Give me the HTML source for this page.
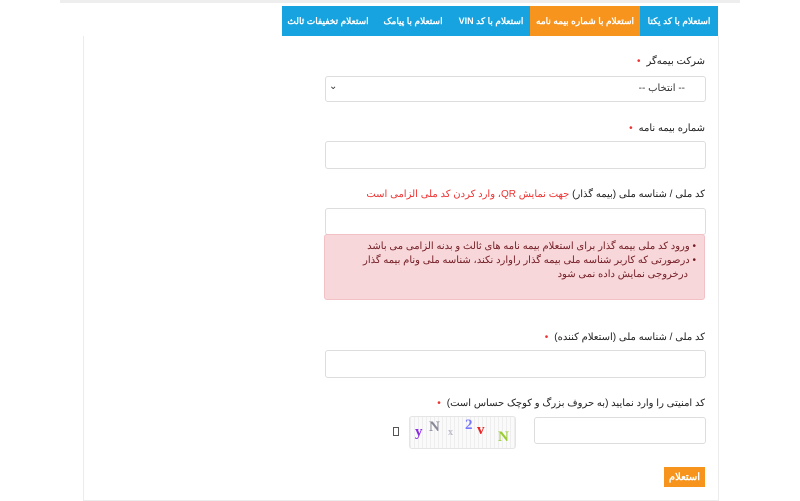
<!DOCTYPE html>
<html><head><meta charset="utf-8"><style>
body{margin:0;width:800px;height:500px;background:#fff;font-family:"Liberation Sans","Noto Sans CJK SC",sans-serif;font-size:10px;color:#333;position:relative;overflow:hidden}
.a{position:absolute}
.topbar{left:60px;top:0;width:680px;height:3px;background:#eee}
.tabs{left:282px;top:6px;width:436px;height:30px;background:#16a3df;display:flex;direction:rtl}
.tab{color:#fff;font-size:9px;font-weight:bold;display:flex;align-items:center;justify-content:center;height:30px;white-space:nowrap}
.panel{left:83px;top:36px;width:634px;height:464px;border:1px solid #ececec;border-top:none}
.lbl{direction:rtl;right:95px;font-size:10px;color:#222;white-space:nowrap}
.lbl .r{color:#e33;margin-right:6px}
.inp{left:325px;width:379px;border:1px solid #ddd;border-radius:3px;background:#fff}
</style></head><body>
<div class="a topbar"></div>
<div class="a tabs">
<div class="tab" style="width:78px">استعلام با کد یکتا</div>
<div class="tab" style="width:110px;background:#f7941d">استعلام با شماره بیمه نامه</div>
<div class="tab" style="width:78px">استعلام با کد VIN</div>
<div class="tab" style="width:78px">استعلام با پیامک</div>
<div class="tab" style="width:92px">استعلام تخفیفات ثالث</div>
</div>
<div class="a panel"></div>
<div class="a lbl" style="top:56px">شرکت بیمه‌گر<span class="r">•</span></div>
<div class="a inp" style="top:76px;height:24px"><span class="a" style="right:20px;top:6px;direction:rtl">-- انتخاب --</span><span class="a" style="left:3px;top:4px;font-size:10px">⌄</span></div>
<div class="a lbl" style="top:123px">شماره بیمه نامه<span class="r">•</span></div>
<div class="a inp" style="top:141px;height:26px"></div>
<div class="a lbl" style="top:189px">کد ملی / شناسه ملی (بیمه گذار) <span style="color:#e33">جهت نمایش QR، وارد کردن کد ملی الزامی است</span></div>
<div class="a inp" style="top:208px;height:25px"></div>
<div class="a" style="left:324px;top:234px;width:381px;height:66px;background:#f8d7da;border:1px solid #f1c1c6;border-radius:3px;box-sizing:border-box;direction:rtl;color:#721c24;font-size:10px;line-height:14px;padding:5px 8px 0 6px">
<div>• ورود کد ملی بیمه گذار برای استعلام بیمه نامه های ثالث و بدنه الزامی می باشد</div>
<div style="padding-right:8px;text-indent:-8px">• درصورتی که کاربر شناسه ملی بیمه گذار راوارد نکند، شناسه ملی ونام بیمه گذار درخروجی نمایش داده نمی شود</div>
</div>
<div class="a lbl" style="top:332px">کد ملی / شناسه ملی (استعلام کننده)<span class="r">•</span></div>
<div class="a inp" style="top:350px;height:26px"></div>
<div class="a lbl" style="top:398px">کد امنیتی را وارد نمایید (به حروف بزرگ و کوچک حساس است)<span class="r">•</span></div>
<div class="a" style="left:534px;top:417px;width:170px;height:25px;border:1px solid #ddd;border-radius:3px"></div>
<div class="a" style="left:409px;top:416px;width:105px;height:31px;border:1px solid #e5e5e5;border-radius:3px;background:repeating-linear-gradient(90deg,#eee 0 1px,#fafafa 1px 4px),#f6f6f6;font-family:'Liberation Serif',serif;font-weight:bold;font-size:15px">
<span class="a" style="left:5px;top:7px;color:#8b2be2">y</span><span class="a" style="left:19px;top:2px;color:#889">N</span><span class="a" style="left:38px;top:10px;color:#bbc;font-size:10px">x</span><span class="a" style="left:55px;top:0;color:#77f">2</span><span class="a" style="left:67px;top:5px;color:#e22">v</span><span class="a" style="left:88px;top:12px;color:#9c3">N</span></div>
<div class="a" style="left:393px;top:427px;width:4px;height:7px;border:1px solid #555"></div>
<div class="a" style="left:664px;top:467px;width:41px;height:20px;background:#f7941d;color:#fff;font-size:10px;font-weight:bold;display:flex;align-items:center;justify-content:center">استعلام</div>
</body></html>
